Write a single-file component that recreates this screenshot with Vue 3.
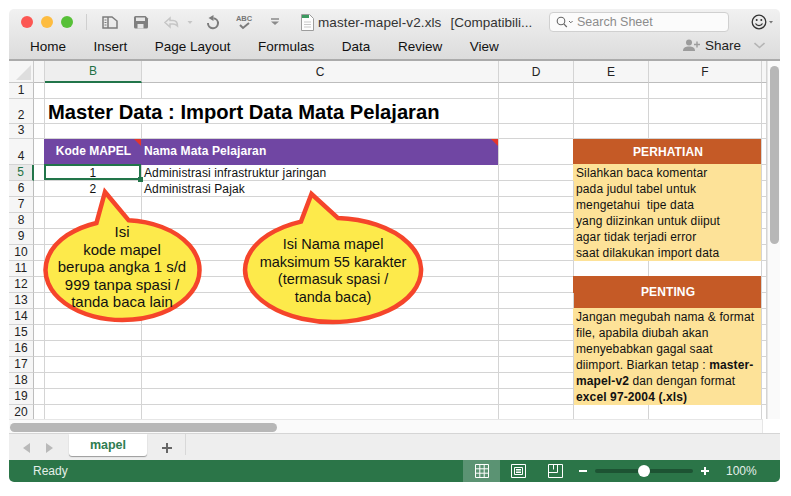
<template>
  <div class="page">
    <div class="window">
      <header class="titlebar">
        <div class="title-row">
          <div class="lights">
            <span class="light red"></span>
            <span class="light amber"></span>
            <span class="light green"></span>
          </div>
          <span class="divider"></span>
          <!-- toolbar icons, drawn in page coordinates -->
          <svg class="tools" width="198" height="26" viewBox="100 9 198 26">
            <g fill="none" stroke="#7c7c7c" stroke-width="1.5">
              <path d="M104 17h9l5 4v7h-14z" />
              <path d="M109 17v11" />
            </g>
            <path d="M105.500 20h2M105.500 22.500h2M105.500 25h2" stroke="#7c7c7c" stroke-width="1" />
            <path d="M136.500 16h10l2.500 2.500v8.500a1.500 1.500 0 0 1-1.500 1.500h-11a1.500 1.500 0 0 1-1.500-1.500v-9.500a1.500 1.500 0 0 1 1.500-1.500z" fill="#7f7f7f" />
            <rect x="137" y="17.500" width="9" height="3.500" fill="#e6e6e6" />
            <rect x="138.500" y="24" width="6" height="4.500" fill="#e6e6e6" />
            <path d="M171 18l-5 4.500 5 4.500v-3h3c2 0 3 .5 4.500 2 0-3.500-2-5.500-4.500-5.500h-3z" fill="none" stroke="#c6c6c6" stroke-width="1.500" />
            <path d="M188.500 21h5l-2.500 3z" fill="#c6c6c6" />
            <path d="M214.500 18.300A5 5 0 1 1 209 23" fill="none" stroke="#7c7c7c" stroke-width="2" />
            <path d="M209.500 18l5-3v6z" fill="#7c7c7c" />
            <text x="245" y="21" class="abc">ABC</text>
            <path d="M241 25l3 3 6-5" fill="none" stroke="#7c7c7c" stroke-width="2" />
            <path d="M272 19h8" stroke="#8a8a8a" stroke-width="1.500" />
            <path d="M272 21.500h8l-4 3.500z" fill="#8a8a8a" />
          </svg>
          <svg class="doc" width="13" height="17" viewBox="0 0 13 17">
            <path d="M.5.500h8l4 4v12h-12z" fill="#fdfdfd" stroke="#9c9c9c" />
            <path d="M1 1h7v3h-7z" fill="#3c9a5f" />
            <path d="M3 8h7M3 10.500h7M3 13h7" stroke="#c9c9c9" />
          </svg>
          <span class="filename">master-mapel-v2.xls</span>
          <span class="compat">[Compatibili...</span>
          <div class="search">
            <svg width="17" height="12" viewBox="0 0 17 12">
              <circle cx="5" cy="5" r="3.800" fill="none" stroke="#666" stroke-width="1.100" />
              <path d="M7.800 7.800l3 3.200" stroke="#666" stroke-width="1.200" />
              <path d="M13 5l1.800 1.800 1.800-1.800" fill="none" stroke="#666" />
            </svg>
            <span>Search Sheet</span>
          </div>
          <svg class="smiley" width="22" height="16" viewBox="0 0 22 16">
            <circle cx="8" cy="8" r="6.800" fill="none" stroke="#333" stroke-width="1.300" />
            <circle cx="5.700" cy="6" r="1" fill="#333" />
            <circle cx="10.300" cy="6" r="1" fill="#333" />
            <path d="M4.500 9.500c1.500 2.800 5.500 2.800 7 0" fill="none" stroke="#333" stroke-width="1.200" />
            <path d="M18 7h4l-2 2.500z" fill="#777" />
          </svg>
        </div>
        <div class="menu-row">
          <nav class="menu">
            <span v-for="item in menu" :key="item">{{ item }}</span>
          </nav>
          <div class="share">
            <svg width="18" height="13" viewBox="0 0 18 13">
              <circle cx="6" cy="3.500" r="3" fill="#9c9c9c" />
              <path d="M0 12c0-3.500 2.500-4.500 6-4.500s6 1 6 4.500z" fill="#9c9c9c" />
              <path d="M11 5.500h6M14 2.500v6" stroke="#9c9c9c" stroke-width="1.400" />
            </svg>
            <span>Share</span>
            <svg class="chevron" width="11" height="7" viewBox="0 0 11 7">
              <path d="M.5 1l5 4.500 5-4.500" fill="none" stroke="#b5b5b5" stroke-width="1.600" />
            </svg>
          </div>
        </div>
      </header>

      <div class="workspace">
        <div class="sheet">
          <div class="grid">
            <div class="corner"><span class="corner-mark"></span></div>
            <div
              v-for="col in columns"
              :key="col"
              class="col-head"
              :class="{ active: col === 'B' }"
            >{{ col }}</div>
            <template v-for="row in rows" :key="row.n">
              <div class="row-head" :class="{ active: row.n === 5 }">{{ row.n }}</div>
              <div
                v-for="cell in row.cells"
                :key="cell.key"
                class="cell"
                :class="cell.cls"
              >
                <template v-if="cell.lines">
                  <div v-for="(line, i) in cell.lines" :key="i" class="note-line" v-html="line"></div>
                </template>
                <template v-else>{{ cell.text }}</template>
              </div>
            </template>
          </div>

          <svg class="bubbles" width="758" height="358" viewBox="9 61 758 358">
            <path class="bubble" d="M105 192L128.500 220.150A77 50 0 1 1 96.500 222.940Z" />
            <path class="bubble" d="M311.500 194L338 218.100A88 52 0 1 1 301 221.600Z" />
          </svg>
          <div class="bubble-text first">
            <div v-for="line in bubbleOne" :key="line">{{ line }}</div>
          </div>
          <div class="bubble-text second">
            <div v-for="line in bubbleTwo" :key="line">{{ line }}</div>
          </div>
        </div>
        <div class="vscroll"><span class="vthumb"></span></div>
      </div>

      <div class="hscroll">
        <div class="htrack"><span class="hthumb"></span></div>
      </div>

      <div class="tabbar">
        <svg class="tab-arrows" width="30" height="10" viewBox="0 0 30 10">
          <path d="M7 0v10l-7-5z" fill="#b9b9b9" />
          <path d="M23 0v10l7-5z" fill="#b9b9b9" />
        </svg>
        <div class="tab">mapel</div>
        <svg class="tab-add" width="10" height="10" viewBox="0 0 10 10">
          <path d="M0 5h10M5 0v10" stroke="#666" stroke-width="2" />
        </svg>
        <span class="tab-sep"></span>
      </div>

      <footer class="statusbar">
        <span class="ready">Ready</span>
        <div class="views">
          <div class="view active">
            <svg width="14" height="14" viewBox="0 0 14 14">
              <path d="M.5.500h13v13h-13zM.5 4.800h13M.5 9.200h13M4.800.500v13M9.200.500v13" fill="none" stroke="#fff" />
            </svg>
          </div>
          <div class="view">
            <svg width="15" height="14" viewBox="0 0 15 14">
              <path d="M.5.500h14v13h-14z" fill="none" stroke="#fff" />
              <path d="M3.500 3.500h8v7h-8zM5 5.500h5M5 7h5M5 8.500h5" fill="none" stroke="#fff" />
            </svg>
          </div>
          <div class="view">
            <svg width="15" height="14" viewBox="0 0 15 14">
              <path d="M.5.500h14v13h-14zM.5 8.500h9v-8M5.500.500v5" fill="none" stroke="#fff" />
            </svg>
          </div>
        </div>
        <div class="zoom">
          <svg width="8" height="2" viewBox="0 0 8 2"><path d="M0 1h8" stroke="#fff" stroke-width="2" /></svg>
          <div class="slider"><span class="knob"></span></div>
          <svg width="8" height="8" viewBox="0 0 8 8"><path d="M0 4h8M4 0v8" stroke="#fff" stroke-width="2" /></svg>
        </div>
        <span class="percent">100%</span>
      </footer>
    </div>
  </div>
</template>

<script setup>
const menu = ['Home', 'Insert', 'Page Layout', 'Formulas', 'Data', 'Review', 'View'];
const columns = ['', 'B', 'C', 'D', 'E', 'F', ''].map((c, i) => c || ' '.repeat(i + 1));

const bubbleOne = ['Isi', 'kode mapel', 'berupa angka 1 s/d', '999 tanpa spasi /', 'tanda baca lain'];
const bubbleTwo = ['Isi Nama mapel', 'maksimum 55 karakter', '(termasuk spasi /', 'tanda baca)'];

const noteOne = [
  'Silahkan baca komentar',
  'pada judul tabel untuk',
  'mengetahui&nbsp; tipe data',
  'yang diizinkan untuk diiput',
  'agar tidak terjadi error',
  'saat dilakukan import data',
];
const noteTwo = [
  'Jangan megubah nama &amp; format',
  'file, apabila diubah akan',
  'menyebabkan gagal saat',
  'diimport. Biarkan tetap : <b>master-</b>',
  '<b>mapel-v2</b> dan dengan format',
  '<b>excel 97-2004 (.xls)</b>',
];

// null means the cell is covered by a merged neighbour
const special = {
  2: { B: { text: 'Master Data : Import Data Mata Pelajaran', cls: 'title' }, C: null },
  4: {
    B: { text: 'Kode MAPEL', cls: 'th th-center flag' },
    C: { text: 'Nama Mata Pelajaran', cls: 'th flag' },
    E: { text: 'PERHATIAN', cls: 'note-head' },
    F: null,
  },
  5: {
    B: { text: '1', cls: 'center selected' },
    C: { text: 'Administrasi infrastruktur jaringan' },
    E: { lines: noteOne, cls: 'note rows-6' },
    F: null,
  },
  6: { B: { text: '2', cls: 'center' }, C: { text: 'Administrasi Pajak' }, E: null, F: null },
  7: { E: null, F: null },
  8: { E: null, F: null },
  9: { E: null, F: null },
  10: { E: null, F: null },
  12: { E: { text: 'PENTING', cls: 'note-head rows-2 pull-up' }, F: null },
  13: { E: null, F: null },
  14: { E: { lines: noteTwo, cls: 'note rows-6' }, F: null },
  15: { E: null, F: null },
  16: { E: null, F: null },
  17: { E: null, F: null },
  18: { E: null, F: null },
  19: { E: null, F: null },
};

const rows = Array.from({ length: 20 }, (_, i) => {
  const n = i + 1;
  const cells = [];
  for (const key of ['A', 'B', 'C', 'D', 'E', 'F', 'G']) {
    const cell = special[n] && special[n][key];
    if (cell === null) continue;
    cells.push({ key, text: '', cls: '', ...cell });
  }
  return { n, cells };
});
</script>

<style scoped>
.page {
  width: 791px;
  height: 496px;
  padding: 9px 11px 14px 9px;
  box-sizing: border-box;
  background: #fff;
  font-family: "Liberation Sans", Arial, sans-serif;
  color: #111;
}
.window {
  height: 473px;
  display: flex;
  flex-direction: column;
  border-radius: 5px;
  overflow: hidden;
}

/* title bar + ribbon tabs */
.titlebar {
  height: 52px;
  box-sizing: border-box;
  flex: none;
  background: linear-gradient(#f1f1f1, #dcdcdc);
  border-bottom: 2px solid #ababab;
}
.title-row {
  height: 26px;
  display: flex;
  align-items: center;
}
.lights {
  display: flex;
  gap: 8px;
  margin-left: 12px;
}
.light {
  width: 12px;
  height: 12px;
  border-radius: 50%;
}
.red { background: #fc5753; }
.amber { background: #fdbc40; }
.green { background: #57c038; }
.divider {
  width: 1px;
  height: 16px;
  margin-left: 13px;
  background: #cfcfcf;
}
.tools {
  margin-left: 12px;
  flex: none;
}
.abc {
  font-size: 7.500px;
  font-weight: 700;
  fill: #777;
  text-anchor: middle;
}
.doc {
  margin-left: 4px;
  flex: none;
}
.filename {
  margin: 1px 0 0 4px;
  font-size: 13.500px;
  letter-spacing: 0.1px;
  color: #333;
  white-space: nowrap;
}
.compat {
  margin: 1px 0 0 9px;
  font-size: 13.500px;
  color: #333;
  white-space: nowrap;
}
.search {
  position: absolute;
  left: 549px;
  top: 12px;
  width: 180px;
  height: 20px;
  box-sizing: border-box;
  display: flex;
  align-items: center;
  gap: 4px;
  padding-left: 6px;
  background: #fbfbfb;
  border: 1px solid #d0d0d0;
  border-radius: 4px;
  font-size: 12.500px;
  color: #8c8c8c;
}
.smiley {
  position: absolute;
  left: 751px;
  top: 14px;
}
.menu-row {
  height: 22px;
  display: flex;
  align-items: center;
  justify-content: space-between;
}
.menu {
  display: flex;
  gap: 27.500px;
  margin-left: 21px;
  font-size: 13.500px;
  color: #111;
  white-space: nowrap;
}
.share {
  display: flex;
  align-items: center;
  gap: 4px;
  margin: -2px 15px 0 0;
  font-size: 13.500px;
  color: #222;
}
.chevron {
  margin-left: 9px;
}

/* sheet */
.workspace {
  height: 358px;
  flex: none;
  display: flex;
}
.sheet {
  position: relative;
  width: 758px;
  overflow: hidden;
  background: #fff;
}
.grid {
  display: grid;
  grid-template-columns: 25px 11px 97px 357px 75px 75px 113px 5px;
  grid-template-rows: 22px 16px 25px 15px 26px repeat(16, 16px);
}
.corner {
  position: relative;
  background: #f6f6f6;
  border-right: 1px solid #c9c9c9;
  border-bottom: 1px solid #c9c9c9;
}
.corner-mark {
  position: absolute;
  right: 2px;
  bottom: 2px;
  border-style: solid;
  border-width: 0 0 15px 15px;
  border-color: transparent transparent #dedede transparent;
}
.col-head {
  display: flex;
  align-items: center;
  justify-content: center;
  background: #f6f6f6;
  border-right: 1px solid #d4d4d4;
  border-bottom: 1px solid #bdbdbd;
  font-size: 12px;
  color: #222;
  white-space: pre;
}
.col-head.active {
  background: #eeeeee;
  color: #1f7145;
  border-bottom: 2px solid #22754a;
}
.row-head {
  display: flex;
  align-items: flex-end;
  justify-content: center;
  background: #f6f6f6;
  border-right: 1px solid #bdbdbd;
  border-bottom: 1px solid #d4d4d4;
  font-size: 12px;
  line-height: 15px;
  color: #222;
}
.row-head.active {
  background: #e9e9e9;
  color: #1f7145;
  border-right: 2px solid #22754a;
}
.cell {
  box-sizing: border-box;
  min-width: 0;
  border-right: 1px solid #d4d4d4;
  border-bottom: 1px solid #d4d4d4;
  padding-left: 2px;
  font-size: 12px;
  letter-spacing: 0.12px;
  line-height: 16px;
  white-space: nowrap;
  color: #111;
}
.center {
  text-align: center;
  padding-left: 0;
}
.selected {
  position: relative;
}
.selected::after {
  content: "";
  position: absolute;
  inset: -1px 0 0 -1px;
  border: 2px solid #22754a;
}
.selected::before {
  content: "";
  position: absolute;
  right: -2px;
  bottom: -2px;
  width: 5px;
  height: 5px;
  background: #22754a;
  z-index: 1;
}
.title {
  grid-column: span 2;
  padding-left: 3px;
  font-size: 20.200px;
  letter-spacing: 0;
  font-weight: 700;
  line-height: 26px;
  color: #000;
}
.th {
  position: relative;
  margin-left: -1px;
  padding-left: 3px;
  background: #7046a3;
  border-bottom: none;
  font-weight: 700;
  line-height: 25px;
  color: #fff;
}
.th-center {
  text-align: center;
  padding-left: 2px;
  letter-spacing: 0;
}
.flag::after {
  content: "";
  position: absolute;
  top: 0;
  right: 0;
  width: 7px;
  height: 7px;
  background: #e5352b;
  clip-path: polygon(0 0, 100% 0, 100% 100%);
}
.note-head {
  grid-column: span 2;
  display: flex;
  align-items: center;
  justify-content: center;
  margin: 0 0 1px -1px;
  background: #c55a26;
  border-bottom: none;
  font-weight: 700;
  color: #fff;
}
.pull-up {
  margin-top: -1px;
}
.note {
  grid-column: span 2;
  margin: -1px 0 0 -1px;
  padding-left: 3px;
  background: #fde298;
  border-bottom: none;
  color: #111;
}
.rows-6 { grid-row: span 6; }
.rows-2 { grid-row: span 2; }
.note-line {
  height: 16px;
  line-height: 16px;
}
.note-line:first-child {
  margin-top: 1px;
}

/* comment balloons */
.bubbles {
  position: absolute;
  left: 0;
  top: 0;
}
.bubble {
  fill: #fdea4b;
  stroke: #f5452b;
  stroke-width: 4.500;
  stroke-linejoin: miter;
}
.bubble-text {
  position: absolute;
  text-align: center;
  line-height: 17.500px;
  color: #111;
  white-space: nowrap;
}
.first {
  left: 38px;
  top: 162px;
  width: 150px;
  font-size: 15px;
}
.second {
  left: 234px;
  top: 175px;
  width: 180px;
  font-size: 14.500px;
}

/* scrollbars */
.vscroll {
  flex: 1;
  background: #fafafa;
  border-left: 1px solid #e6e6e6;
}
.vthumb {
  display: block;
  width: 9px;
  height: 178px;
  margin: 5px 0 0 2px;
  border-radius: 5px;
  background: #b7b7b7;
}
.hscroll {
  height: 15px;
  flex: none;
  background: #fff;
  border-bottom: 1px solid #d5d5d5;
  box-sizing: border-box;
}
.htrack {
  width: 754px;
  height: 14px;
  background: #fafafa;
  border: 1px solid #e6e6e6;
  border-width: 1px 1px 0 0;
  box-sizing: border-box;
  padding-top: 3px;
}
.hthumb {
  display: block;
  width: 267px;
  height: 9px;
  margin-left: 1px;
  border-radius: 5px;
  background: #b7b7b7;
}

/* tabs */
.tabbar {
  height: 26px;
  flex: none;
  box-sizing: border-box;
  display: flex;
  align-items: flex-start;
  background: #eeeeee;
}
.tab-arrows {
  margin: 9px 0 0 14px;
}
.tab {
  width: 78px;
  height: 22px;
  margin-left: 16px;
  background: #fff;
  border-radius: 0 0 3px 3px;
  box-shadow: 0 1px 1px #9a9a9a;
  text-align: center;
  font-size: 12.500px;
  font-weight: 700;
  line-height: 22px;
  color: #2f7d51;
}
.tab-add {
  margin: 9px 0 0 15px;
}
.tab-sep {
  width: 1px;
  height: 21px;
  margin-left: 13px;
  background: #d8d8d8;
}

/* status bar */
.statusbar {
  height: 22px;
  flex: none;
  display: flex;
  align-items: center;
  background: #2b7548;
  color: #e4efe8;
  font-size: 12px;
}
.ready {
  margin-left: 24px;
  width: 430px;
}
.views {
  display: flex;
  align-self: stretch;
}
.view {
  width: 37px;
  display: flex;
  align-items: center;
  justify-content: center;
}
.view.active {
  background: #5b9373;
}
.zoom {
  display: flex;
  align-items: center;
  gap: 8px;
  margin-left: 5px;
}
.slider {
  position: relative;
  width: 98px;
  height: 4px;
  border-radius: 2px;
  background: #1d5333;
}
.knob {
  position: absolute;
  left: 43px;
  top: -4px;
  width: 12px;
  height: 12px;
  border-radius: 50%;
  background: #fff;
}
.percent {
  margin-left: 17px;
}
</style>

<style>
body {
  background: #fff;
}
</style>
